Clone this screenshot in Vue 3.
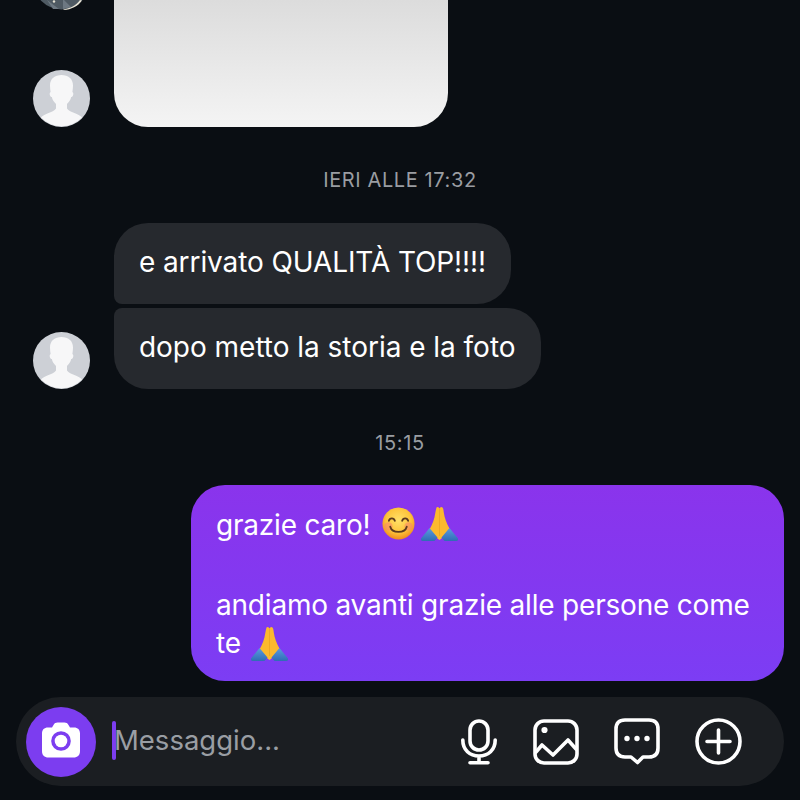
<script setup>
const incoming = [
  { text: 'e arrivato QUALITÀ TOP!!!!', cls: 'top-bubble' },
  { text: 'dopo metto la storia e la foto', cls: 'bottom-bubble' }
]
const dots = [13, 23, 33]
const personPath = 'M28.500 5c-6.500 0-11.500 3.500-11.500 10.500 0 2 .3 4.500.6 6.500-1 .5-1.200 2-.6 3.400.5 1.200 1.200 1.700 1.800 1.700.7 3 2.400 5.400 4.200 6.900v4.500c-1.500 2.200-4.500 3.500-8 4.700-3.200 1.100-5.500 2.500-7 4.300a28.500 28.500 0 0 0 41 0c-1.500-1.800-3.800-3.200-7-4.300-3.500-1.200-6.500-2.500-8-4.700V34c1.800-1.500 3.500-3.900 4.200-6.900.6 0 1.300-.5 1.800-1.700.6-1.400.4-2.900-.6-3.400.3-2 .6-4.500.6-6.500C40 8.500 35 5 28.500 5z'
const sleeves = 'M0 32.500 8.500 22l8 9.500-2.500 3c-.5.5-1 .5-1.500.5H2c-2 0-3-1.300-2-2.500zM37 32.500 28.500 22l-8 9.500 2.500 3c.5.5 1 .5 1.500.5H35c2 0 3-1.300 2-2.500z'
const palms = 'M15.500 1.500c1-1 2.200-.5 3 1 .8-1.500 2-2 3-1 1 1 1 3 1.300 5 .7 5 2.700 11 5.700 16L20 33l-1.500 1-1.500-1-8.500-9.500c3-5 5-11 5.700-16 .3-2 .8-4 1.300-6z'
</script>

<template>
  <div class="screen">
    <div class="row photo-row">
      <svg class="avatar-top" width="57" height="57" viewBox="0 0 57 57">
        <circle cx="28.500" cy="28.500" r="28" fill="#4f5a63" />
        <path d="M14 47l12 9h-6zM30 46l8 8-8 2z" fill="#6d7882" />
        <path d="M30 56.500c7-1 13-4 17-9.500l2 .5c-4 6-11 9-18 9.500z" fill="#e6e2d4" />
        <circle cx="21" cy="48.500" r="1.200" fill="#e6e2d4" />
      </svg>
      <svg class="avatar" width="57" height="57" viewBox="0 0 57 57">
        <circle cx="28.500" cy="28.500" r="28.500" fill="#cdd0d6" />
        <path :d="personPath" fill="#f7f7f8" />
      </svg>
      <div class="photo"></div>
    </div>

    <p class="time first-time">IERI ALLE 17:32</p>

    <div class="row in-row">
      <svg class="avatar" width="57" height="57" viewBox="0 0 57 57">
        <circle cx="28.500" cy="28.500" r="28.500" fill="#cdd0d6" />
        <path :d="personPath" fill="#f7f7f8" />
      </svg>
      <div class="bubbles">
        <div v-for="m in incoming" :key="m.text" class="bubble" :class="m.cls">{{ m.text }}</div>
      </div>
    </div>

    <p class="time second-time">15:15</p>

    <div class="mine">
      <div class="mine-line">
        <span>grazie caro!</span>
        <svg class="emoji smile" viewBox="0 0 36 36">
          <defs>
            <radialGradient id="face" cx="50%" cy="40%" r="60%">
              <stop offset="0%" stop-color="#ffe169" />
              <stop offset="65%" stop-color="#fdc33a" />
              <stop offset="100%" stop-color="#f08a1d" />
            </radialGradient>
            <linearGradient id="sleeve" x1="0" y1="0" x2="0" y2="1">
              <stop offset="0%" stop-color="#5b9ae0" />
              <stop offset="100%" stop-color="#2f6db4" />
            </linearGradient>
          </defs>
          <circle cx="18" cy="18" r="17.500" fill="url(#face)" />
          <circle cx="7" cy="21" r="4.500" fill="#f7846b" opacity="0.55" />
          <circle cx="29" cy="21" r="4.500" fill="#f7846b" opacity="0.55" />
          <path d="M7.500 15c1-3.500 5.500-3.500 6.500 0M22 15c1-3.500 5.500-3.500 6.500 0" fill="none" stroke="#5b3a1e" stroke-width="2" stroke-linecap="round" />
          <path d="M9 21.500c2 7.500 16 7.500 18 0" fill="none" stroke="#5b3a1e" stroke-width="2" stroke-linecap="round" />
        </svg>
        <svg class="emoji hands first-hands" viewBox="0 0 37 35">
          <path :d="palms" fill="#fcb92e" />
          <path :d="sleeves" fill="url(#sleeve)" />
          <path d="M18.500 3v27" stroke="#e8a023" stroke-width="0.700" fill="none" />
        </svg>
      </div>
      <div class="mine-gap"></div>
      <div class="mine-line">andiamo avanti grazie alle persone come</div>
      <div class="mine-line">
        <span>te</span>
        <svg class="emoji hands second-hands" viewBox="0 0 37 35">
          <path :d="palms" fill="#fcb92e" />
          <path :d="sleeves" fill="url(#sleeve)" />
          <path d="M18.500 3v27" stroke="#e8a023" stroke-width="0.700" fill="none" />
        </svg>
      </div>
    </div>

    <div class="composer">
      <div class="camera">
        <svg class="camera-icon" width="38" height="36" viewBox="0 0 38 36">
          <path d="M10 5.500 11.500 3C12.500 1.200 13.800.5 15.500.5h7c1.700 0 3 .7 4 2.500L28 5.500h4c3.800 0 6 2.200 6 6V29c0 4.200-2.300 6.500-6.500 6.500h-25C2.300 35.500 0 33.200 0 29V11.500c0-3.800 2.200-6 6-6z" fill="#fff" />
          <circle cx="19" cy="19" r="9.800" fill="#7c3df0" />
          <circle cx="19" cy="19" r="6.300" fill="#fff" />
        </svg>
      </div>
      <span class="caret"></span>
      <span class="placeholder">Messaggio...</span>
      <div class="actions">
        <svg class="mic" width="36" height="46" viewBox="0 0 36 46" fill="none" stroke="#fff" stroke-width="3.600" stroke-linecap="round">
          <rect x="9" y="2" width="18" height="29" rx="9" />
          <path d="M1.800 21c0 10 7 16 16.200 16s16.200-6 16.200-16M18 37v6.500M9 43.800h18" />
        </svg>
        <svg width="46" height="46" viewBox="0 0 46 46" fill="none" stroke="#fff" stroke-width="3.600" stroke-linecap="round" stroke-linejoin="round">
          <rect x="2" y="2" width="42" height="42" rx="9" />
          <path d="M3 33l6-7 11 10 15-15 8 9" />
          <circle cx="11.500" cy="11" r="3.100" fill="#fff" stroke="none" />
        </svg>
        <svg width="46" height="47" viewBox="0 0 46 47" fill="none" stroke="#fff" stroke-width="3.600" stroke-linecap="round" stroke-linejoin="round">
          <path d="M11 2h24c6 0 9 3 9 9v19c0 6-3 9-9 9h-6l-5.500 5.500L17 39h-6c-6 0-9-3-9-9V11c0-6 3-9 9-9z" />
          <circle v-for="x in dots" :key="x" :cx="x" cy="20.500" r="2.700" fill="#fff" stroke="none" />
        </svg>
        <svg width="47" height="47" viewBox="0 0 47 47" fill="none" stroke="#fff" stroke-width="3.600" stroke-linecap="round">
          <circle cx="23.500" cy="23.500" r="21.500" />
          <path d="M23.500 12v23M12 23.500h23" />
        </svg>
      </div>
    </div>
  </div>
</template>

<style scoped>
.screen {
  width: 800px;
  height: 800px;
  overflow: hidden;
  background: #0a0e13;
  font-family: Inter, "Liberation Sans", sans-serif;
  color: #fff;
  display: flex;
  flex-direction: column;
}
.row {
  display: flex;
  align-items: flex-end;
  gap: 24px;
  padding-left: 33px;
}
.photo-row {
  position: relative;
  height: 127px;
  flex: none;
}
.avatar-top {
  position: absolute;
  left: 33px;
  top: -47px;
}
.avatar {
  flex: none;
}
.photo {
  width: 334px;
  height: 127px;
  background: linear-gradient(#dcdcdc, #f4f4f4);
  border-radius: 0 0 34px 34px;
}
.time {
  margin: 0;
  text-align: center;
  font-size: 20px;
  line-height: 24px;
  letter-spacing: 0.6px;
  color: #9a9da2;
}
.first-time {
  padding-top: 41px;
}
.in-row {
  padding-top: 31px;
}
.bubbles {
  display: flex;
  flex-direction: column;
  align-items: flex-start;
  gap: 4px;
}
.bubble {
  background: #26292e;
  height: 81px;
  box-sizing: border-box;
  display: flex;
  align-items: center;
  padding: 0 25px 4px;
  font-size: 28px;
}
.top-bubble {
  border-radius: 34px 34px 34px 8px;
  letter-spacing: -0.1px;
}
.bottom-bubble {
  border-radius: 8px 34px 34px 34px;
  letter-spacing: -0.03px;
}
.second-time {
  padding-top: 42px;
}
.mine {
  align-self: flex-end;
  margin-top: 30px;
  margin-right: 16px;
  width: 593px;
  height: 196px;
  flex: none;
  box-sizing: border-box;
  padding: 21px 25px 0;
  border-radius: 34px;
  background: linear-gradient(#8a34ec, #7c3df4);
  font-size: 28px;
  letter-spacing: -0.2px;
}
.mine-line {
  height: 38px;
  line-height: 38px;
  white-space: nowrap;
  display: flex;
  align-items: center;
}
.mine-gap {
  height: 42px;
}
.emoji {
  flex: none;
}
.smile {
  width: 33px;
  height: 33px;
  margin-left: 12px;
  margin-right: 6px;
  margin-top: -3px;
}
.hands {
  width: 37px;
  height: 35px;
}
.first-hands {
  margin-top: -3px;
}
.second-hands {
  margin-left: 10px;
}
.composer {
  margin: 16px 16px 0 16px;
  height: 89px;
  flex: none;
  border-radius: 45px;
  background: #1b1e22;
  display: flex;
  align-items: center;
  padding-left: 10px;
  padding-right: 42px;
}
.camera {
  width: 70px;
  height: 70px;
  border-radius: 50%;
  background: #7c3df0;
  display: flex;
  align-items: center;
  justify-content: center;
  flex: none;
}
.camera-icon {
  margin-bottom: 4px;
}
.caret {
  width: 4px;
  height: 39px;
  border-radius: 2px;
  background: #7c3df0;
  margin-left: 16px;
  margin-bottom: 2px;
}
.placeholder {
  font-size: 27.5px;
  color: #9a9ea4;
  margin-left: -2px;
  margin-bottom: 4px;
}
.actions {
  margin-left: auto;
  display: flex;
  align-items: center;
  gap: 35px;
}
.mic {
  margin-right: 1px;
}
</style>
